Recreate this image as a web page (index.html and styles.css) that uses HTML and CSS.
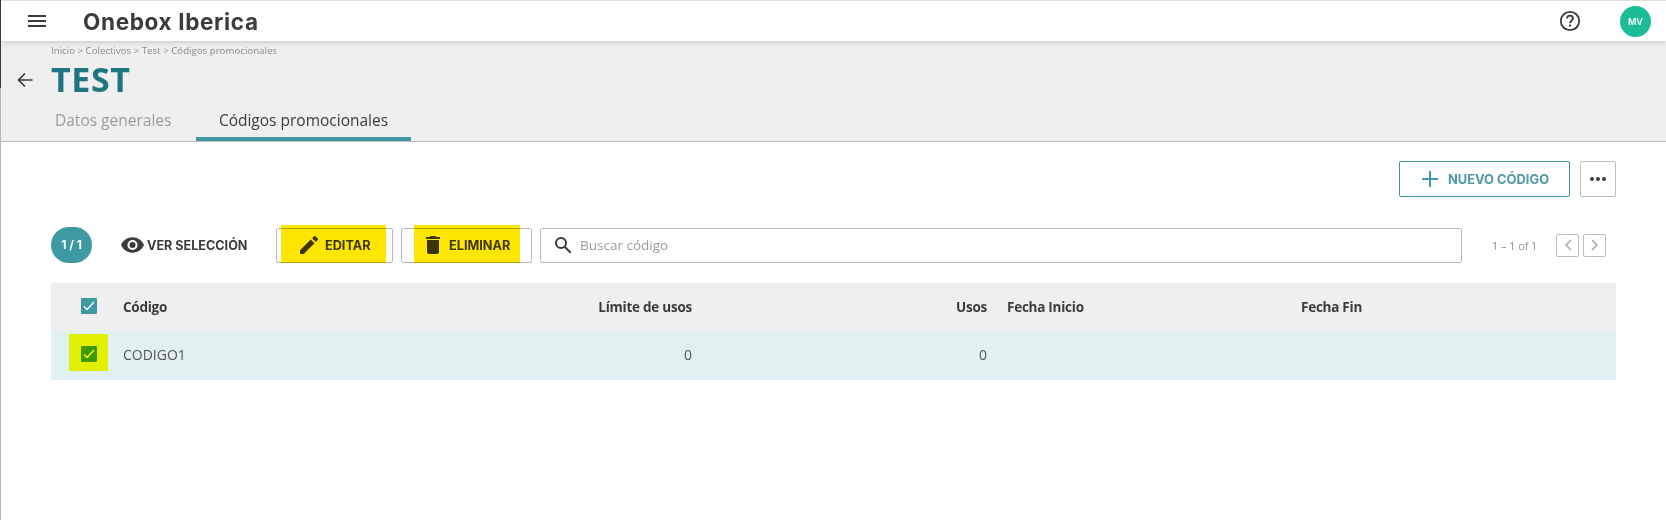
FILE: index.html
```html
<!DOCTYPE html>
<html lang="es">
<head>
<meta charset="utf-8">
<title>Códigos promocionales</title>
<link rel="stylesheet" href="styles.css">
</head>
<body>
<div class="page">
  <header class="topbar">
    <svg class="menu-icon" viewBox="0 0 18 12" width="18" height="12"><path d="M0 1h18M0 6h18M0 11h18" stroke="#3d3a3a" stroke-width="2"/></svg>
    <div class="brand">Onebox Iberica</div>
    <svg class="help-icon" viewBox="0 0 24 24" width="24" height="24"><circle cx="12" cy="12" r="9.2" fill="none" stroke="#3d3a3a" stroke-width="1.8"/><path d="M9 9.6a3 3 0 0 1 6 0c0 2-3 2.3-3 4.7" fill="none" stroke="#3d3a3a" stroke-width="1.8"/><rect x="11" y="15.6" width="2" height="2" fill="#3d3a3a"/></svg>
    <div class="avatar">MV</div>
  </header>
  <section class="subheader">
    <div class="crumbs">Inicio &gt; Colectivos &gt; Test &gt; Códigos promocionales</div>
    <div class="title-row">
      <svg class="back-icon" viewBox="0 0 16 16" width="16" height="16"><path d="M15.5 8H2M8 1.5 1.5 8 8 14.5" fill="none" stroke="#3d3a3a" stroke-width="1.7"/></svg>
      <h1>TEST</h1>
    </div>
    <nav class="tabs">
      <div class="tab">Datos generales</div>
      <div class="tab active">Códigos promocionales</div>
    </nav>
  </section>
  <main class="content">
    <div class="actions">
      <button class="btn-new"><svg viewBox="0 0 16 16" width="16" height="16"><path d="M8 0v16M0 8h16" stroke="#3d9aa3" stroke-width="2"/></svg>NUEVO CÓDIGO</button>
      <button class="btn-more"><svg viewBox="0 0 16 4" width="16" height="4"><circle cx="2" cy="2" r="2" fill="#3d3a3a"/><circle cx="8" cy="2" r="2" fill="#3d3a3a"/><circle cx="14" cy="2" r="2" fill="#3d3a3a"/></svg></button>
    </div>
    <div class="toolbar">
      <div class="count">1 / 1</div>
      <div class="view-sel">
        <svg viewBox="0 0 24 16" width="23" height="16"><path fill="#3d3a3a" d="M12 0C6.5 0 2 3.3 0 8c2 4.700 6.500 8 12 8s10-3.300 12-8c-2-4.700-6.500-8-12-8zm0 13.300A5.300 5.300 0 1 1 12 2.700a5.300 5.300 0 0 1 0 10.600zM12 4.800a3.200 3.200 0 1 0 0 6.400 3.200 3.200 0 0 0 0-6.400z"/></svg>
        VER SELECCIÓN
      </div>
      <button class="btn-tool btn-edit">
        <svg viewBox="0 0 18 18" width="18" height="18"><path fill="#3d3a3a" d="M0 14.300V18h3.700L14.500 7.200l-3.700-3.700zM17.700 4a1 1 0 0 0 0-1.400L15.400.3a1 1 0 0 0-1.400 0l-1.900 1.900 3.700 3.700z"/></svg>
        EDITAR
        <span class="marker marker-edit"></span>
      </button>
      <button class="btn-tool btn-del">
        <svg viewBox="0 0 14 18" width="14" height="18"><path fill="#3d3a3a" d="M1 16a2 2 0 0 0 2 2h8a2 2 0 0 0 2-2V4H1zM14 1h-3.500l-1-1h-5l-1 1H0v2h14z"/></svg>
        ELIMINAR
        <span class="marker marker-del"></span>
      </button>
      <div class="search">
        <svg viewBox="0 0 18 18" width="18" height="18"><circle cx="7" cy="7" r="5" fill="none" stroke="#3d3a3a" stroke-width="2"/><path d="m10.700 10.700 6 6" stroke="#3d3a3a" stroke-width="2"/></svg>
        <span>Buscar código</span>
      </div>
      <div class="pager">
        <span class="pager-text">1 – 1 of 1</span>
        <button class="pager-btn"><svg viewBox="0 0 8 12" width="8" height="12"><path d="M7 1 2 6l5 5" fill="none" stroke="#a9a9a9" stroke-width="1.500"/></svg></button>
        <button class="pager-btn"><svg viewBox="0 0 8 12" width="8" height="12"><path d="m1 1 5 5-5 5" fill="none" stroke="#a9a9a9" stroke-width="1.500"/></svg></button>
      </div>
    </div>
    <div class="table">
      <div class="tr head">
        <div class="c-check"><span class="check"><svg viewBox="0 0 16 16" width="16" height="16"><path d="m3 8.500 3 3 7-7.500" fill="none" stroke="#fff" stroke-width="1.300"/></svg></span></div>
        <div class="c-code">Código</div>
        <div class="c-limit">Límite de usos</div>
        <div class="c-uses">Usos</div>
        <div class="c-start">Fecha Inicio</div>
        <div class="c-end">Fecha Fin</div>
      </div>
      <div class="tr row">
        <div class="c-check"><span class="check"><svg viewBox="0 0 16 16" width="16" height="16"><path d="m3 8.500 3 3 7-7.500" fill="none" stroke="#fff" stroke-width="1.300"/></svg></span><span class="marker marker-check"></span></div>
        <div class="c-code">CODIGO1</div>
        <div class="c-limit">0</div>
        <div class="c-uses">0</div>
        <div class="c-start"></div>
        <div class="c-end"></div>
      </div>
    </div>
  </main>
</div>
</body>
</html>
```
FILE: styles.css
```css
* { box-sizing: border-box; }
html, body { margin: 0; padding: 0; background: #fff; }
body { width: 1666px; height: 520px; overflow: hidden; font-family: "Open Sans", "Liberation Sans", sans-serif; color: #3d3a3a; }
button { font-family: inherit; background: #fff; padding: 0; cursor: pointer; }

.page { position: relative; height: 520px; border-left: 1px solid #b5b5b5; }
.page::before { content: ""; position: absolute; left: -1px; top: 0; width: 1px; height: 88px; background: #3a3a3a; z-index: 2; }

.topbar { height: 41px; display: flex; align-items: center; background: #fff; border-top: 1px solid #dcdcdc; box-shadow: 0 1px 6px rgba(0,0,0,.18); padding-left: 27px; position: relative; }
.brand { margin-left: 37px; font-family: Inter, "Liberation Sans", sans-serif; font-weight: 700; font-size: 22.500px; letter-spacing: .65px; }
.help-icon { margin-left: auto; margin-right: 38px; }
.avatar { width: 31px; height: 31px; margin-right: 15px; border-radius: 50%; background: #1cbc98; color: #fff; font: 600 9px Inter, sans-serif; display: flex; align-items: center; justify-content: center; }

.subheader { height: 101px; background: #efefef; border-bottom: 1px solid #bcbcbc; padding-top: 4px; }
.crumbs { margin-left: 50px; font-size: 9.700px; line-height: 12px; color: #8b8b8b; }
.title-row { height: 42px; display: flex; align-items: center; padding: 2px 0 0 16px; }
.back-icon { margin-top: 1px; }
h1 { margin: 0 0 0 18px; font-family: "Open Sans", sans-serif; font-weight: 700; font-size: 34px; letter-spacing: .6px; color: #1f7680; }
.tabs { display: flex; height: 42px; }
.tab { font-size: 15.500px; line-height: 24px; color: #9a9a9a; text-align: center; }
.tab:first-child { width: 168px; padding: 9px 0 0 27px; margin-left: 27px; text-align: left; }
.tab.active { color: #3d3a3a; width: 215px; padding: 9px 0 0; border-bottom: 4px solid #3d9aa3; }

.content { padding: 19px 49px 0 50px; }
.actions { display: flex; justify-content: flex-end; gap: 10px; height: 36px; padding-right: 1px; }
.btn-new { width: 171px; height: 36px; border: 1px solid #3d8f99; border-radius: 2px; display: flex; align-items: center; justify-content: center; gap: 10px; padding-left: 2px; color: #4f9aa3; font: 700 12.900px Inter, sans-serif; }
.btn-more { width: 36px; height: 36px; border: 1px solid #bdbdbd; border-radius: 2px; display: flex; align-items: center; justify-content: center; }

.toolbar { display: flex; align-items: center; height: 36px; margin-top: 30px; }
.count { width: 41px; height: 36px; border-radius: 18px; background: #3d9aa3; color: #fff; font: 700 12px/36px Inter, sans-serif; text-align: center; }
.view-sel { margin-left: 29px; width: 155px; display: flex; align-items: center; gap: 3px; font: 700 12.600px Inter, sans-serif; white-space: nowrap; }
.btn-tool { position: relative; height: 35px; border: 1px solid #b8b8b8; border-radius: 2px; display: flex; align-items: center; font: 700 12.700px Inter, sans-serif; color: #3d3a3a; }
.btn-edit { width: 117px; padding-left: 23px; gap: 7px; }
.btn-del { width: 131px; margin-left: 8px; padding-left: 24px; gap: 9px; }
.marker { position: absolute; background: #ffe600; mix-blend-mode: multiply; }
.marker-edit { left: 4px; top: -4px; width: 105px; height: 38px; }
.marker-del { left: 12px; top: -4px; width: 106px; height: 38px; }
.search { width: 922px; height: 35px; margin-left: 8px; border: 1px solid #b8b8b8; border-radius: 2px; display: flex; align-items: center; padding-left: 13px; gap: 8px; font-size: 13.500px; color: #9a9a9a; }
.pager { display: flex; align-items: center; margin-left: 30px; }
.pager-text { width: 64px; font-size: 10.800px; color: #8d8d8d; }
.pager-btn { width: 23px; height: 23px; margin-right: 4px; border: 1px solid #bdbdbd; border-radius: 2px; display: flex; align-items: center; justify-content: center; }

.table { margin-top: 20px; width: 1565px; }
.tr { display: flex; align-items: center; font-size: 13.500px; }
.head { height: 48px; background: #efefef; font-weight: 700; letter-spacing: -.25px; }
.row { height: 49px; background: #e1f0f1; padding-bottom: 2px; font-size: 14px; color: #555; }
.c-check { position: relative; width: 72px; display: flex; padding: 0 0 2px 30px; }
.check { width: 16px; height: 16px; background: #3d9aa3; border-radius: 1px; display: block; }
.check svg { display: block; }
.marker-check { left: 18px; top: -12px; width: 39px; height: 37px; background: #ffff00; }
.c-code { width: 300px; }
.c-limit { width: 269px; text-align: right; }
.c-uses { width: 295px; text-align: right; }
.c-start { width: 294px; margin-left: 20px; }
.c-end { flex: 1; }
```
